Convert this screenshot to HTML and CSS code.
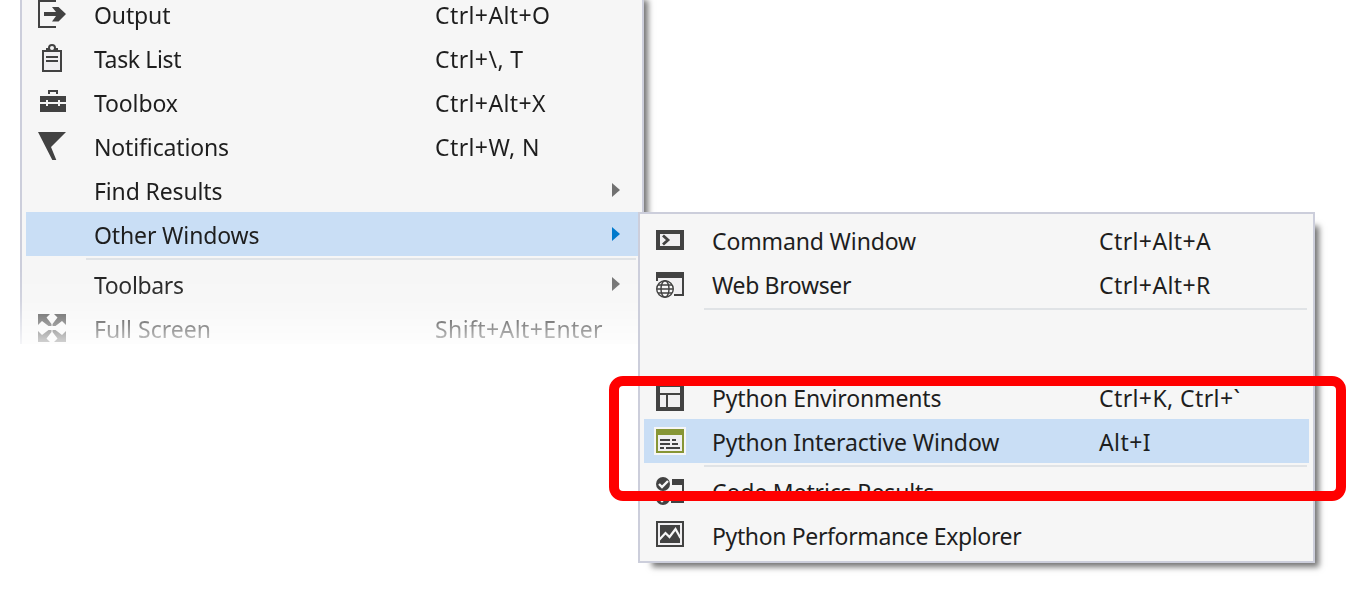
FILE: index.html
```html
<!DOCTYPE html>
<html lang="en">
<head>
<meta charset="utf-8">
<title>View menu</title>
<link rel="stylesheet" href="styles.css">
</head>
<body>
<main class="desktop">
  <div class="menu-layer">
  <ul class="menu menu-view">
    <li class="item">
      <svg class="icon" viewBox="0 0 32 32"><path d="M20 3H3V29H20" fill="none" stroke="#424242" stroke-width="2"/><path d="M8 14H20L16 9H22.500L30 16L22.500 23.500H16L20 18H8z"/></svg>
      <span class="label">Output</span><span class="keys">Ctrl+Alt+O</span>
    </li>
    <li class="item">
      <svg class="icon" viewBox="0 0 32 32"><path d="M7 9H25V29H7z" fill="#f0eff1" stroke="#424242" stroke-width="2"/><path d="M10 9V6h2a4 4 0 0 1 8 0H22v3z"/><circle cx="16" cy="6" r="2" fill="#f6f6f6"/><path d="M10 14h12v2H10zM10 18h12v2H10z"/></svg>
      <span class="label tight">Task List</span><span class="keys">Ctrl+\, T</span>
    </li>
    <li class="item">
      <svg class="icon" viewBox="0 0 32 32"><path d="M12 8V4h10v4h-2V6h-6v2z"/><path d="M4 10h26v6h-6v-2h-2v2H12v-2h-2v2H4zM4 18h6v2h2v-2h10v2h2v-2h6v8H4z"/></svg>
      <span class="label">Toolbox</span><span class="keys">Ctrl+Alt+X</span>
    </li>
    <li class="item">
      <svg class="icon" viewBox="0 0 32 32"><path d="M2 2H30L15 17L20.300 30H16.300z"/></svg>
      <span class="label">Notifications</span><span class="keys">Ctrl+W, N</span>
    </li>
    <li class="item"><span class="icon"></span><span class="label">Find Results</span><span class="arrow"></span></li>
    <li class="item selected"><span class="icon"></span><span class="label">Other Windows</span><span class="arrow"></span></li>
    <li class="rule"></li>
    <li class="item"><span class="icon"></span><span class="label tight">Toolbars</span><span class="arrow"></span></li>
    <li class="item">
      <svg class="icon" viewBox="0 0 32 32"><path id="corner" d="M2 2H14L10.500 5.500L15.500 12V14H12.500L6 9L2 13z"/><use href="#corner" transform="translate(32 0) scale(-1 1)"/><use href="#corner" transform="translate(0 32) scale(1 -1)"/><use href="#corner" transform="translate(32 32) scale(-1 -1)"/></svg>
      <span class="label even">Full Screen</span><span class="keys">Shift+Alt+Enter</span>
    </li>
  </ul>
  </div>

  <ul class="menu menu-windows">
    <li class="item">
      <svg class="icon" viewBox="0 0 32 32"><path d="M4 8H28V24H4z" fill="#f0eff1" stroke="#424242" stroke-width="4"/><path d="M9 11.500L14 16L9 20.500" fill="none" stroke="#424242" stroke-width="2.800"/></svg>
      <span class="label">Command Window</span><span class="keys">Ctrl+Alt+A</span>
    </li>
    <li class="item">
      <svg class="icon" viewBox="0 0 32 32"><path d="M4 10h24v16H4z" fill="#f0eff1"/><path d="M2 4H30V28H20V26H28V10H4V13H2z"/><circle cx="11" cy="21" r="10" fill="#f6f6f6"/><g fill="none" stroke="#424242" stroke-width="1.400"><circle cx="11" cy="21" r="8.300"/><ellipse cx="11" cy="21" rx="4" ry="8.300"/><path d="M3 21H19M4 17H18M4 25H18"/></g></svg>
      <span class="label tight">Web Browser</span><span class="keys">Ctrl+Alt+R</span>
    </li>
    <li class="rule"></li>
    <li class="blank"></li>
    <li class="item">
      <svg class="icon" viewBox="0 0 32 32"><path d="M2 2H30V30H2z"/><path d="M6 6H26V12H6zM6 14H12V26H6zM14 14H26V26H14z" fill="#f0eff1"/></svg>
      <span class="label">Python Environments</span><span class="keys">Ctrl+K, Ctrl+`</span>
    </li>
    <li class="item selected">
      <svg class="icon" viewBox="0 0 32 32"><path d="M0 2H32V30H0z" fill="#f6f6f6"/><path d="M2 4H30V28H2z" fill="#879636"/><path d="M4 10H28V26H4z" fill="#f0eff1"/><path d="M6 14h10v2H6zM18 14h4v2h-4zM6 18h10v2H6zM18 18h6v2h-6zM6 22h4v2H6zM12 22h14v2H12z"/></svg>
      <span class="label">Python Interactive Window</span><span class="keys">Alt+I</span>
    </li>
    <li class="rule"></li>
    <li class="item">
      <svg class="icon" viewBox="0 0 32 32"><path d="M18 4H30V28H17V26H28V10H18z"/><circle cx="9" cy="9" r="7"/><circle cx="9" cy="23" r="7"/><path d="M5 9L8 12L14 6M5 23L8 26L14 20" fill="none" stroke="#f6f6f6" stroke-width="2.400"/></svg>
      <span class="label">Code Metrics Results</span>
    </li>
    <li class="item">
      <svg class="icon" viewBox="0 0 32 32"><path d="M3 3H29V27H3z" fill="#f0eff1" stroke="#424242" stroke-width="2"/><path d="M6 6H26V24H6z"/><path d="M5 21L11.500 14L15.500 18L21.500 10L26.500 19" fill="none" stroke="#f6f6f6" stroke-width="2.200"/></svg>
      <span class="label tight">Python Performance Explorer</span>
    </li>
  </ul>

  <div class="callout"></div>
</main>
</body>
</html>
```
FILE: styles.css
```css
* { box-sizing: border-box; }

body {
  margin: 0;
  background: #fff;
  color: #1e1e1e;
  font-family: "Noto Sans", "Open Sans", sans-serif;
  font-size: 23px;
}

.desktop {
  position: relative;
  width: 1363px;
  height: 596px;
  overflow: hidden;
}

/* The lower edge of the parent menu dissolves into the page. */
.menu-layer {
  width: 700px;
  height: 344px;
  padding-left: 20px;
  overflow: hidden;
  -webkit-mask-image: linear-gradient(#000 270px, rgba(0,0,0,.88) 300px, rgba(0,0,0,.5) 326px, rgba(0,0,0,.22) 344px);
  mask-image: linear-gradient(#000 270px, rgba(0,0,0,.88) 300px, rgba(0,0,0,.5) 326px, rgba(0,0,0,.22) 344px);
}

.menu {
  margin: 0;
  padding: 4px;
  list-style: none;
  background: #f6f6f6;
  border: 2px solid #cccedb;
  box-shadow: 9px 9px 6px -5px rgba(0,0,0,.55);
}

.menu-view {
  width: 624px;
  margin-top: -14px;
}

.menu-windows {
  position: absolute;
  left: 638px;
  top: 212px;
  width: 677px;
  height: 351px;
}

.item {
  display: flex;
  align-items: center;
  height: 44px;
  padding-left: 10px;
  line-height: 44px;
  white-space: nowrap;
}

.icon {
  width: 32px;
  height: 32px;
  flex: none;
  fill: #424242;
}

.label {
  width: 341px;
  flex: none;
  margin-left: 26px;
  padding-top: 2px;
  letter-spacing: -.14px;
}

.label.tight { letter-spacing: -.36px; }
.label.even { letter-spacing: 0; }

.menu-windows .label { width: 387px; }

.keys {
  padding-top: 2px;
  letter-spacing: .4px;
}

.arrow {
  margin-left: 177px;
  border-left: 8px solid #717171;
  border-top: 7px solid transparent;
  border-bottom: 7px solid transparent;
}

.selected { background: #c9def5; }
.selected .arrow { border-left-color: #007acc; }

.rule {
  height: 6px;
  margin: 0 2px 0 60px;
  border: solid #f6f6f6;
  border-width: 2px 0;
  background: #e0e3e6;
}

.blank { height: 63px; }

.callout {
  position: absolute;
  left: 609px;
  top: 376px;
  width: 737px;
  height: 125px;
  border: 10px solid #f00;
  border-radius: 14px;
}
```
